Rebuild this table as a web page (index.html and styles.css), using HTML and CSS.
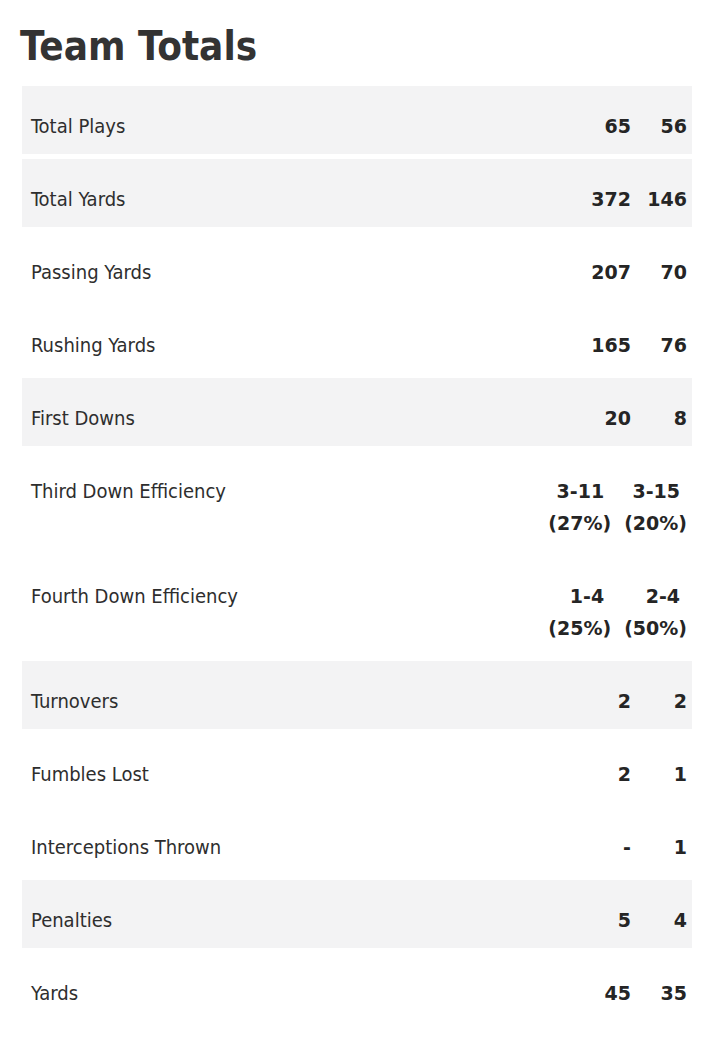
FILE: index.html
```html
<!DOCTYPE html>
<html lang="en">
<head>
<meta charset="utf-8">
<title>Team Totals</title>
<link rel="stylesheet" href="styles.css">
</head>
<body>
<section class="totals">
  <h1 class="title">Team Totals</h1>
  <div class="stats">
    <div class="row row-head">
      <span class="label">Total Plays</span>
      <span class="vals"><span class="val">65</span><span class="val val-b">56</span></span>
    </div>
    <div class="row row-head">
      <span class="label">Total Yards</span>
      <span class="vals"><span class="val">372</span><span class="val val-b">146</span></span>
    </div>
    <div class="row">
      <span class="label">Passing Yards</span>
      <span class="vals"><span class="val">207</span><span class="val val-b">70</span></span>
    </div>
    <div class="row">
      <span class="label">Rushing Yards</span>
      <span class="vals"><span class="val">165</span><span class="val val-b">76</span></span>
    </div>
    <div class="row row-head">
      <span class="label">First Downs</span>
      <span class="vals"><span class="val">20</span><span class="val val-b">8</span></span>
    </div>
    <div class="row">
      <span class="label">Third Down Efficiency</span>
      <span class="vals">
        <span class="val"><span class="line1">3-11</span><span class="line2">(27%)</span></span>
        <span class="val val-b"><span class="line1">3-15</span><span class="line2">(20%)</span></span>
      </span>
    </div>
    <div class="row">
      <span class="label">Fourth Down Efficiency</span>
      <span class="vals">
        <span class="val"><span class="line1">1-4</span><span class="line2">(25%)</span></span>
        <span class="val val-b"><span class="line1">2-4</span><span class="line2">(50%)</span></span>
      </span>
    </div>
    <div class="row row-head">
      <span class="label">Turnovers</span>
      <span class="vals"><span class="val">2</span><span class="val val-b">2</span></span>
    </div>
    <div class="row">
      <span class="label">Fumbles Lost</span>
      <span class="vals"><span class="val">2</span><span class="val val-b">1</span></span>
    </div>
    <div class="row">
      <span class="label">Interceptions Thrown</span>
      <span class="vals"><span class="val">-</span><span class="val val-b">1</span></span>
    </div>
    <div class="row row-head">
      <span class="label">Penalties</span>
      <span class="vals"><span class="val">5</span><span class="val val-b">4</span></span>
    </div>
    <div class="row">
      <span class="label">Yards</span>
      <span class="vals"><span class="val">45</span><span class="val val-b">35</span></span>
    </div>
  </div>
</section>
</body>
</html>
```

FILE: styles.css
```css
html, body {
  margin: 0;
  padding: 0;
  background: #ffffff;
}

body {
  font-family: "DejaVu Sans Condensed", "DejaVu Sans", sans-serif;
  font-stretch: condensed;
  color: #2c2c2c;
}

.totals {
  padding: 23px 30px 0 22px;
}

.title {
  margin: 0 0 17px -2px;
  font-size: 40px;
  line-height: 46px;
  font-weight: bold;
  color: #333333;
}

.stats {
  display: flex;
  flex-direction: column;
  gap: 5px;
}

.row {
  display: flex;
  justify-content: space-between;
  align-items: flex-start;
  padding: 24px 5px 12px 9px;
  font-size: 20px;
  line-height: 32px;
}

.row-head {
  background: #f3f3f4;
}

.label {
  font-weight: normal;
  color: #2e2e2e;
}

.vals {
  display: flex;
  gap: 13px;
  font-family: "DejaVu Sans", sans-serif;
  font-stretch: normal;
  font-size: 19px;
  font-weight: bold;
  color: #252525;
}

.val {
  display: flex;
  flex-direction: column;
  align-items: flex-end;
  text-align: right;
}

.val-b {
  min-width: 43px;
}

.line1 {
  padding-right: 7px;
}
```
